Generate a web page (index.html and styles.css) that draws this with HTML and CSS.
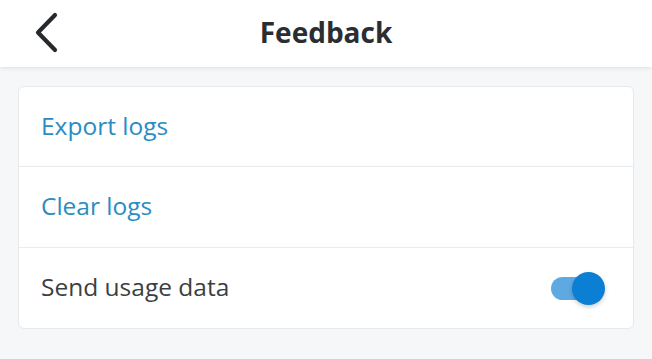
FILE: index.html
```html
<!DOCTYPE html>
<html>
<head>
<meta charset="utf-8">
<link rel="stylesheet" href="styles.css">
</head>
<body>
<header class="topbar">
  <button class="back" aria-label="Back">
    <svg width="28" height="44" viewBox="0 0 28 44"><path d="M21 4 L4 21.5 L21 39" fill="none" stroke="#262a2e" stroke-width="4.2" stroke-linecap="round" stroke-linejoin="round"/></svg>
  </button>
  <h1 class="title">Feedback</h1>
</header>
<main class="content">
  <section class="card">
    <div class="row"><span class="link">Export logs</span></div>
    <div class="row"><span class="link">Clear logs</span></div>
    <div class="row"><span class="label">Send usage data</span>
      <span class="toggle"><span class="track"></span><span class="thumb"></span></span>
    </div>
  </section>
</main>
</body>
</html>
```
FILE: styles.css
```css
html, body { margin: 0; padding: 0; }
body {
  background: #f6f7f9;
  font-family: "Open Sans", "Noto Sans", sans-serif;
  width: 652px;
  height: 359px;
  overflow: hidden;
}
.topbar {
  height: 67px;
  background: #ffffff;
  display: flex;
  align-items: center;
  justify-content: center;
  position: relative;
  box-shadow: 0 1px 4px rgba(0,0,0,0.10);
}
.back {
  position: absolute;
  left: 34px;
  top: 11px;
  background: none;
  border: 0;
  padding: 0;
  width: 28px;
  height: 44px;
}
.back svg { display: block; }
.title {
  margin: 0 0 4px 0;
  font-size: 28px;
  font-weight: 700;
  color: #2a2e33;
  letter-spacing: 0;
}
.content {
  padding: 19px 18px 0 18px;
}
.card {
  background: #ffffff;
  border: 1px solid #e7e8ea;
  border-radius: 6px;
  overflow: hidden;
}
.row {
  height: 81px;
  box-sizing: border-box;
  display: flex;
  align-items: center;
  justify-content: space-between;
  padding: 0 28px 3px 22px;
  border-top: 1px solid #eaebed;
}
.row:first-child { border-top: 0; height: 79px; padding-bottom: 2px; }
.link {
  font-size: 24.5px;
  color: #2a8cc2;
}
.label {
  font-size: 24.5px;
  color: #3c3f42;
}
.toggle {
  position: relative;
  width: 54px;
  height: 34px;
  display: block;
  margin-top: 2px;
}
.track {
  position: absolute;
  left: 0;
  top: 6px;
  width: 46px;
  height: 23px;
  border-radius: 12px;
  background: #5fa9e2;
}
.thumb {
  position: absolute;
  right: 0;
  top: 1px;
  width: 33px;
  height: 33px;
  border-radius: 50%;
  background: #0b7fd4;
  box-shadow: 0 2px 4px rgba(0,0,0,0.2);
}
```
